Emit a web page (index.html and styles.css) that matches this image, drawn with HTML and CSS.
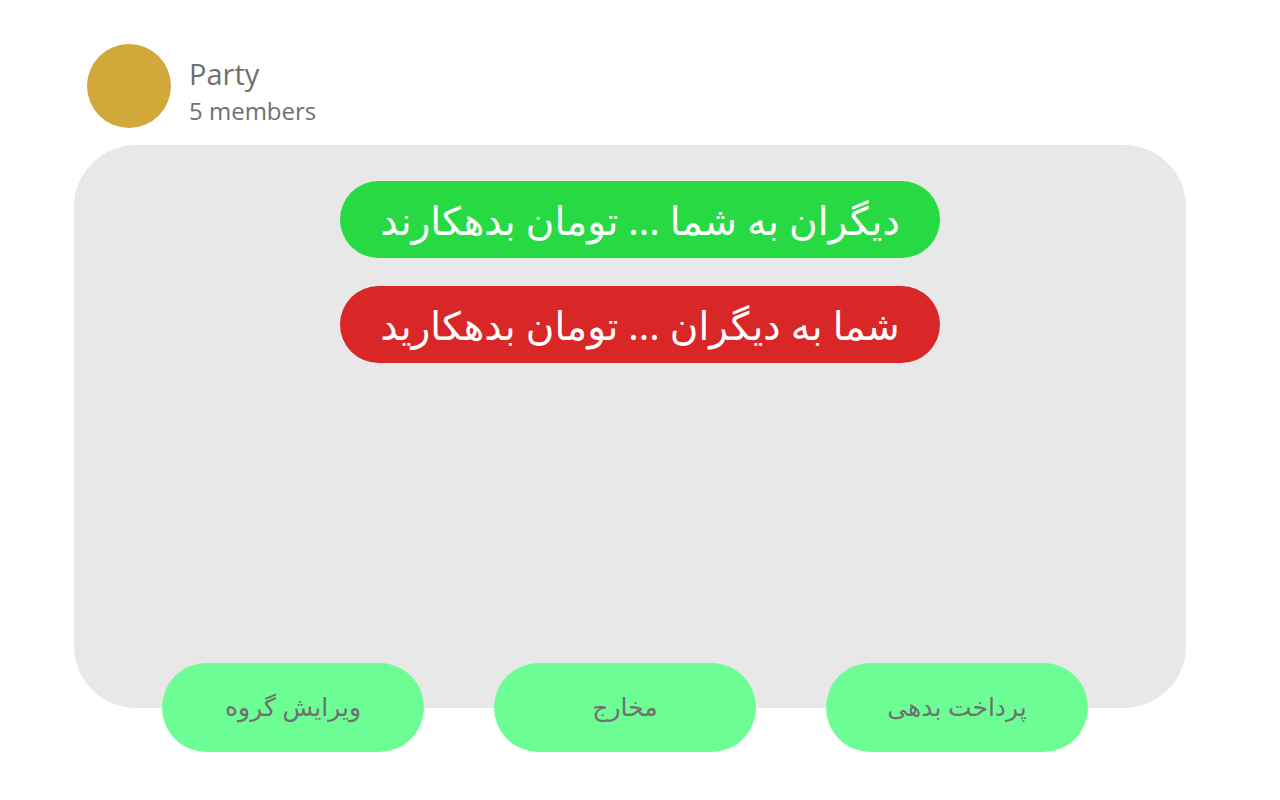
FILE: index.html
```html
<!DOCTYPE html>
<html lang="fa">
<head>
<meta charset="utf-8">
<meta name="viewport" content="width=device-width, initial-scale=1">
<title>Party</title>
<link rel="stylesheet" href="styles.css">
</head>
<body>
<header class="group">
  <div class="avatar"></div>
  <div class="group-text">
    <h1 class="group-name">Party</h1>
    <p class="group-members">5 members</p>
  </div>
</header>
<main>
  <section class="panel" dir="rtl">
    <p class="balance credit">دیگران به شما ... تومان بدهکارند</p>
    <p class="balance debt">شما به دیگران ... تومان بدهکارید</p>
  </section>
  <div class="actions" dir="rtl">
    <button class="action" type="button">پرداخت بدهی</button>
    <button class="action" type="button">مخارج</button>
    <button class="action" type="button">ویرایش گروه</button>
  </div>
</main>
</body>
</html>
```

FILE: styles.css
```css
* {
  box-sizing: border-box;
}

body {
  display: flex;
  flex-direction: column;
  min-height: 100vh;
  margin: 0;
  padding: 44px 94px 48px 74px;
  background: #ffffff;
  color: #707070;
  font-family: "Noto Sans", "DejaVu Sans", sans-serif;
}

h1,
p {
  margin: 0;
  font-weight: 400;
}

.group {
  display: flex;
  align-items: center;
  gap: 18px;
  padding-left: 13px;
  margin-bottom: 17px;
}

.avatar {
  width: 84px;
  height: 84px;
  border-radius: 50%;
  background: #d1a93a;
}

.group-text {
  padding-top: 10px;
  font-family: "Open Sans", "Noto Sans", sans-serif;
}

.group-name {
  font-size: 29px;
  line-height: 40px;
}

.group-members {
  font-size: 24px;
  line-height: 34px;
}

main {
  display: flex;
  flex: 1;
  flex-direction: column;
}

.panel {
  display: flex;
  flex: 1;
  flex-direction: column;
  align-items: center;
  gap: 28px;
  margin-bottom: -45px;
  padding: 36px 0 80px 20px;
  border-radius: 62px;
  background: #e8e8e8;
}

.balance {
  width: 55%;
  min-height: 77px;
  border-radius: 39px;
  color: #ffffff;
  font-size: 39px;
  line-height: 77px;
  text-align: center;
  white-space: nowrap;
}

.credit {
  background: #27da44;
}

.debt {
  background: #d92626;
}

.actions {
  display: flex;
  gap: 70px;
  padding: 0 98px 0 88px;
}

.action {
  flex: 1;
  height: 89px;
  padding: 0 0 4px;
  border: 0;
  border-radius: 45px;
  background: #6cfd94;
  color: #707070;
  font-family: inherit;
  font-size: 25px;
}
```
